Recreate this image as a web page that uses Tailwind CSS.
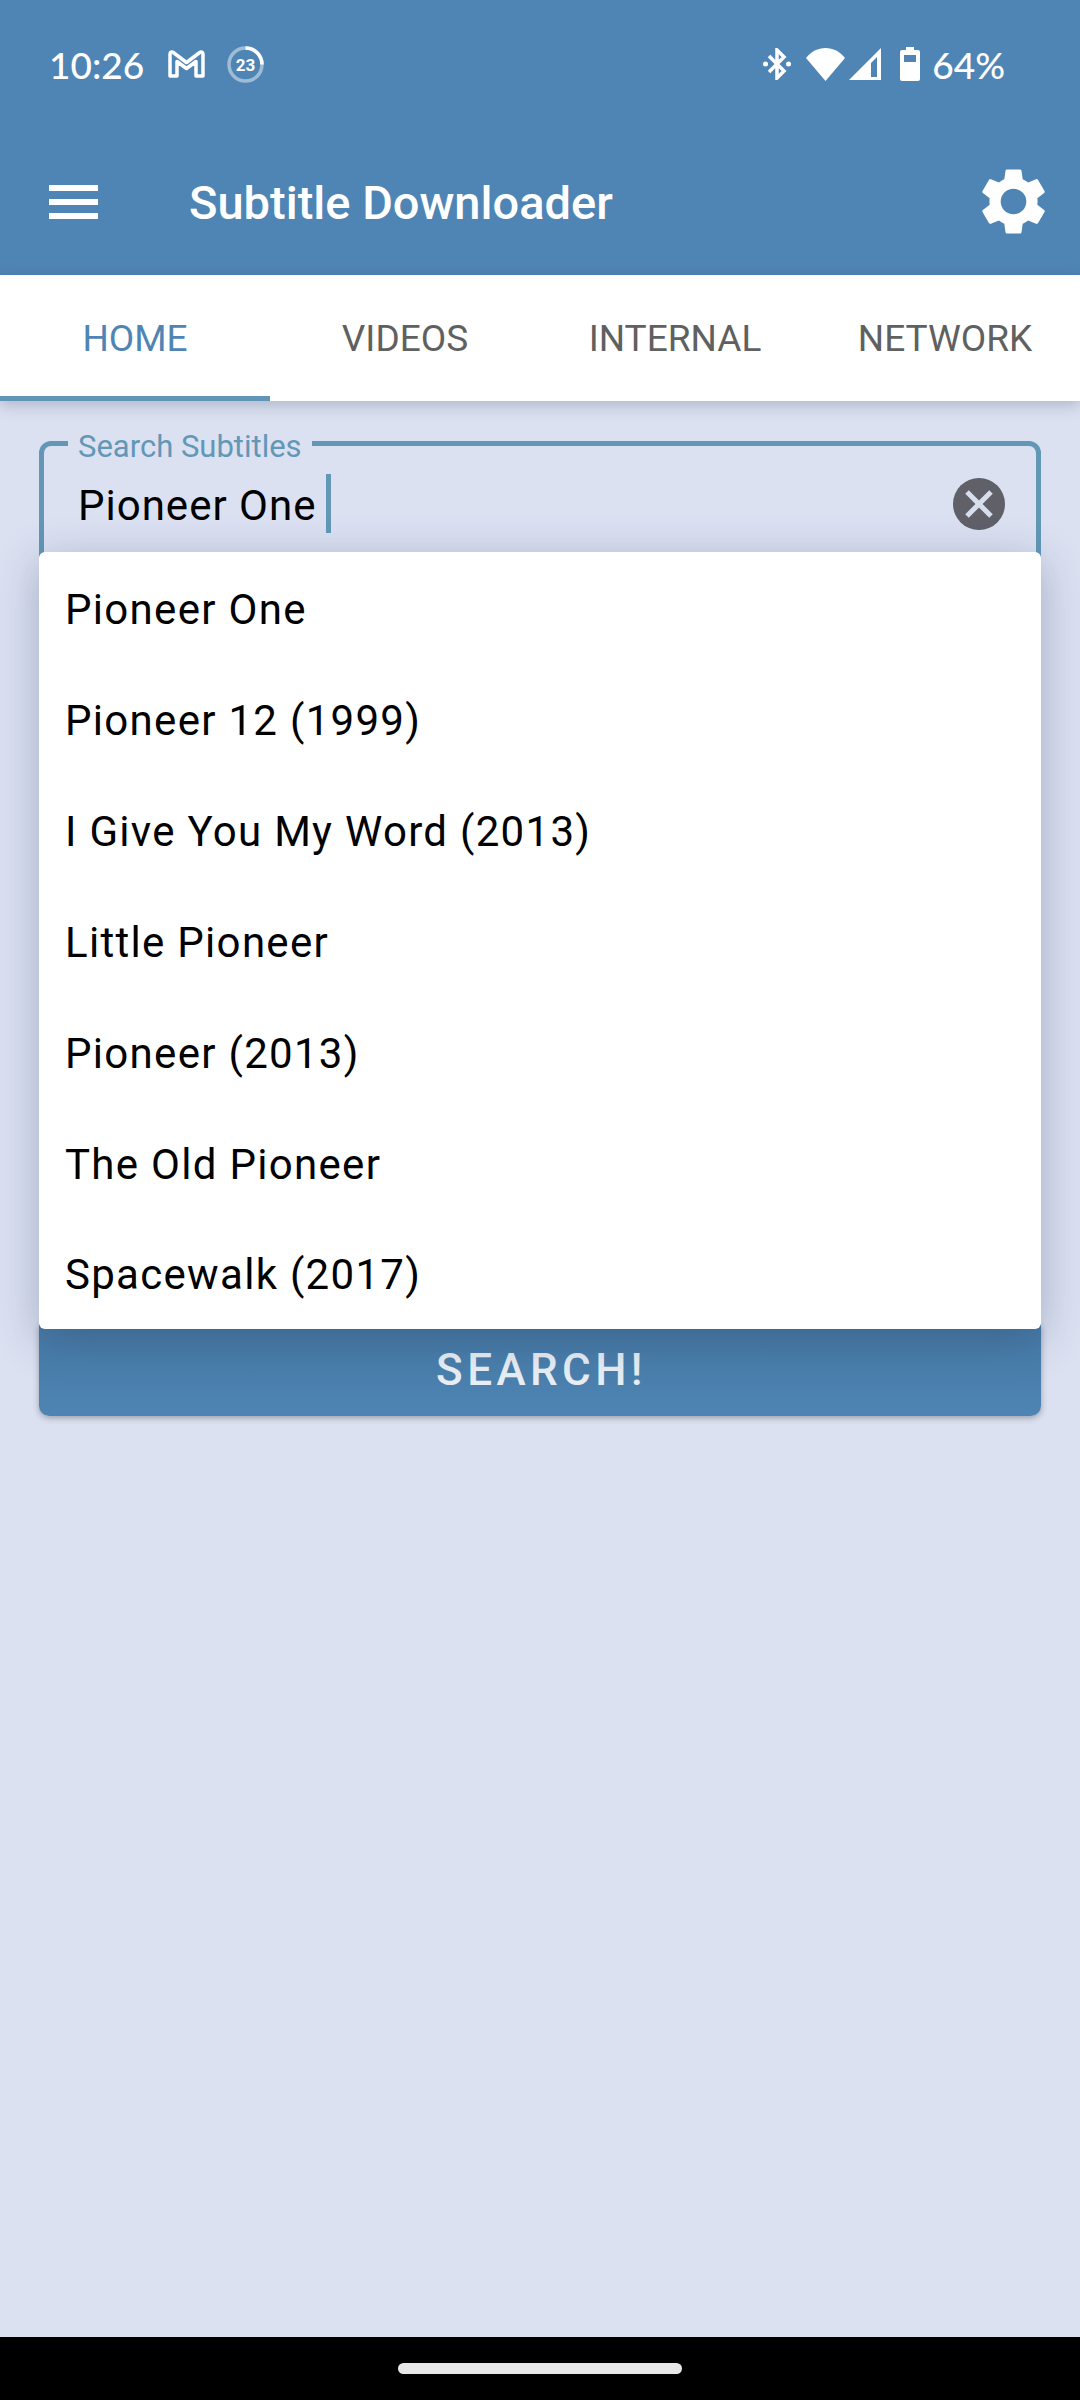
<!DOCTYPE html>
<html><head><meta charset="utf-8">
<script src="https://cdn.jsdelivr.net/npm/@tailwindcss/browser@4"></script>
</head>
<body class="m-0">
<div class="relative w-[1080px] h-[2400px] overflow-hidden flex flex-col bg-[#dbe1f1] font-['Roboto',sans-serif]">
  <header class="h-[275px] shrink-0 bg-[#4f85b5] flex flex-col text-white">
    <div class="h-[128px] shrink-0 flex items-center pl-[49px] pr-[75px]">
      <span class="w-[90px] font-['Lato',sans-serif] font-medium text-[37px] leading-none">10:26</span>
      <svg class="ml-[29px]" width="37" height="28" viewBox="0 0 37 28" fill="none"><path d="M2 26V4a2 2 0 0 1 3.300-1.500L18.500 12.500 31.700 2.500A2 2 0 0 1 35 4v22h-7V11.500l-9.500 7-9.500-7V26z" stroke="#fff" stroke-width="3.500" stroke-linejoin="round"/></svg>
      <svg class="ml-[22px]" width="37" height="37" viewBox="0 0 37 37" fill="none"><circle cx="18.500" cy="18.500" r="16.500" stroke="#fff" stroke-opacity=".45" stroke-width="3.500"/><path d="M18.500 2A16.500 16.500 0 0 1 35 18.500" stroke="#fff" stroke-width="3.500"/><text x="18.500" y="24.500" text-anchor="middle" font-family="Roboto" font-weight="700" font-size="17" fill="#fff">23</text></svg>
      <svg class="ml-auto" width="28" height="32" viewBox="0 0 28 32" fill="none"><path d="M6 8l15 15-7 7V2l7 7L6 24" stroke="#fff" stroke-width="3.500"/><circle cx="2.500" cy="16" r="2.500" fill="#fff"/><circle cx="25.500" cy="16" r="2.500" fill="#fff"/></svg>
      <svg class="ml-[15px]" width="39" height="33" viewBox="0 0 39 33"><path d="M19.500 33L0 10C5 3.500 12 0 19.500 0S34 3.500 39 10z" fill="#fff"/></svg>
      <svg class="ml-[4px]" width="32" height="32" viewBox="0 0 32 32"><path fill-rule="evenodd" d="M32 0v32H0zM28 9l-6 6v14h6z" fill="#fff"/></svg>
      <svg class="ml-[19px]" width="20" height="34" viewBox="0 0 20 34"><path fill-rule="evenodd" d="M6 0h8v3h4a2 2 0 0 1 2 2v27a2 2 0 0 1-2 2H2a2 2 0 0 1-2-2V5a2 2 0 0 1 2-2h4zM4 8v7h12V8z" fill="#fff"/></svg>
      <span class="ml-[12px] font-['Lato',sans-serif] font-medium text-[37px] leading-none">64%</span>
    </div>
    <div class="flex-1 flex items-center pl-[49px] pr-[28px]">
      <div class="w-[49px] h-[34px] flex flex-col justify-between">
        <div class="h-[6px] bg-white"></div><div class="h-[6px] bg-white"></div><div class="h-[6px] bg-white"></div>
      </div>
      <span class="ml-[91px] pt-[2px] text-[47px] leading-none font-medium">Subtitle Downloader</span>
      <svg class="ml-auto" width="77" height="77" viewBox="0 0 24 24"><path fill="#fff" d="M19.430 12.980c.04-.32.07-.64.07-.98s-.03-.66-.07-.98l2.110-1.650c.19-.15.24-.42.12-.64l-2-3.460c-.12-.22-.39-.3-.61-.22l-2.490 1c-.52-.4-1.080-.73-1.690-.98l-.38-2.650C14.460 2.180 14.250 2 14 2h-4c-.25 0-.46.18-.49.420l-.38 2.650c-.61.25-1.170.59-1.690.98l-2.490-1c-.23-.09-.49 0-.61.220l-2 3.460c-.13.220-.07.490.12.640l2.110 1.650c-.04.320-.07.650-.07.980s.03.660.07.980l-2.110 1.650c-.19.150-.24.420-.12.640l2 3.460c.12.220.39.300.61.220l2.490-1c.52.400 1.080.730 1.690.980l.38 2.650c.03.240.24.420.49.420h4c.25 0 .46-.18.49-.42l.38-2.650c.61-.25 1.170-.59 1.690-.98l2.490 1c.23.090.49 0 .61-.22l2-3.460c.12-.22.070-.49-.12-.64zM12 16a4 4 0 1 1 0-8 4 4 0 0 1 0 8z"/></svg>
    </div>
  </header>
  <nav class="relative z-10 h-[126px] shrink-0 bg-white grid grid-cols-4 text-[37px] leading-none text-[#5f6060] shadow-[0_4px_14px_rgba(40,50,80,0.25)]">
    <div class="relative flex items-center justify-center text-[#4f85b5]">HOME<div class="absolute left-0 right-0 bottom-0 h-[5px] bg-[#6095b8]"></div></div>
    <div class="flex items-center justify-center">VIDEOS</div>
    <div class="flex items-center justify-center">INTERNAL</div>
    <div class="flex items-center justify-center">NETWORK</div>
  </nav>
  <main class="flex-1 px-[39px] pt-[40px] flex flex-col">
    <div class="relative h-[975px]">
      <fieldset class="h-[150px] border-[5px] border-[#6297b6] rounded-[12px] pl-[24px] pr-[31px] m-0">
        <legend class="px-[10px] text-[31px] leading-[5px] h-[5px] text-[#6297b6]"><span class="relative top-[3px]">Search Subtitles</span></legend>
        <div class="flex items-center mt-[28px]">
          <span class="ml-[10px] pt-[5px] text-[42px] leading-none tracking-[1px] text-black">Pioneer One</span>
          <div class="ml-[10px] w-[5px] h-[59px] bg-[#6297b6]"></div>
          <div class="ml-auto w-[52px] h-[52px] rounded-full bg-[#5f6068] flex items-center justify-center">
            <svg width="28" height="28" viewBox="0 0 28 28"><path d="M2 2l24 24M26 2L2 26" stroke="#d8dfec" stroke-width="5"/></svg>
          </div>
        </div>
      </fieldset>
      <div class="absolute left-0 right-0 bottom-0 h-[92px] bg-linear-to-b from-[#467aa5] to-[#4e84b3] rounded-b-[10px] shadow-[0_2px_6px_rgba(0,0,0,0.3)] flex items-center justify-center pl-[3px] text-[#e8eef4] text-[44px] leading-none font-medium tracking-[4.400px]">SEARCH!</div>
      <div class="absolute left-0 right-0 top-[111px] h-[777px] bg-white rounded-[6px] shadow-[0_10px_44px_rgba(40,60,100,0.32)] text-[42px] tracking-[1.3px] text-black flex flex-col pt-[2px]">
        <div class="h-[111px] shrink-0 flex items-center pl-[26px]">Pioneer One</div>
        <div class="h-[111px] shrink-0 flex items-center pl-[26px]">Pioneer 12 (1999)</div>
        <div class="h-[111px] shrink-0 flex items-center pl-[26px]">I Give You My Word (2013)</div>
        <div class="h-[111px] shrink-0 flex items-center pl-[26px]">Little Pioneer</div>
        <div class="h-[111px] shrink-0 flex items-center pl-[26px]">Pioneer (2013)</div>
        <div class="h-[111px] shrink-0 flex items-center pl-[26px]">The Old Pioneer</div>
        <div class="h-[109px] shrink-0 flex items-center pl-[26px]">Spacewalk (2017)</div>
      </div>
    </div>
  </main>
  <footer class="h-[63px] shrink-0 bg-black flex items-start justify-center pt-[26px]">
    <div class="w-[284px] h-[11px] rounded-full bg-[#e8e8e8]"></div>
  </footer>
</div>
</body></html>
